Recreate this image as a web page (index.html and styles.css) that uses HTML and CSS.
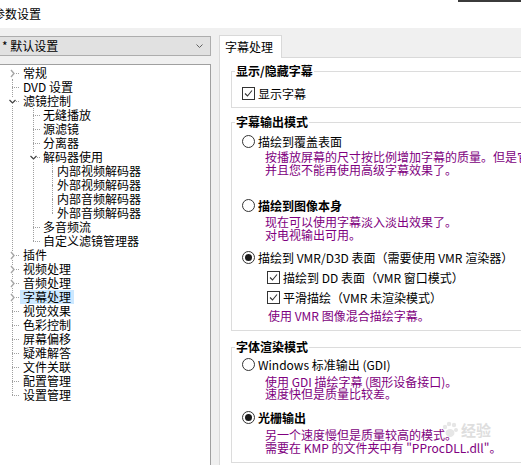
FILE: index.html
```html
<!DOCTYPE html>
<html lang="zh-CN">
<head>
    <meta charset="UTF-8">
    <title>参数设置</title>
    <link rel="stylesheet" href="styles.css">
</head>
<body>

<div class="titlebar">参数设置</div>

<div class="main">
    <div class="left">
        <div class="combo">
            <span>* 默认设置</span>
            <svg class="combo-arrow" width="7" height="5" viewBox="0 0 7 5"><polyline points="0.5,0.5 3.5,3.5 6.5,0.5"/></svg>
        </div>

        <div class="tree">
            <div class="row"><span class="sp"></span><span class="conn first"><svg class="exp" width="7" height="9" viewBox="0 0 7 9"><polyline points="2,1 5,4.5 2,8"/></svg></span><span class="label">常规</span></div>
            <div class="row"><span class="sp"></span><span class="conn"></span><span class="label">DVD 设置</span></div>
            <div class="row"><span class="sp"></span><span class="conn"><svg class="exp open" width="7" height="9" viewBox="0 0 7 9"><polyline points="0.5,3 3.5,6 6.5,3"/></svg></span><span class="label">滤镜控制</span></div>
            <div class="row"><span class="sp"></span><span class="pipe"></span><span class="conn l1"></span><span class="label">无缝播放</span></div>
            <div class="row"><span class="sp"></span><span class="pipe"></span><span class="conn l1"></span><span class="label">源滤镜</span></div>
            <div class="row"><span class="sp"></span><span class="pipe"></span><span class="conn l1"></span><span class="label">分离器</span></div>
            <div class="row"><span class="sp"></span><span class="pipe"></span><span class="conn l1"><svg class="exp open" width="7" height="9" viewBox="0 0 7 9"><polyline points="0.5,3 3.5,6 6.5,3"/></svg></span><span class="label">解码器使用</span></div>
            <div class="row"><span class="sp"></span><span class="pipe"></span><span class="pipe inner"></span><span class="conn l2"></span><span class="label">内部视频解码器</span></div>
            <div class="row"><span class="sp"></span><span class="pipe"></span><span class="pipe inner"></span><span class="conn l2"></span><span class="label">外部视频解码器</span></div>
            <div class="row"><span class="sp"></span><span class="pipe"></span><span class="pipe inner"></span><span class="conn l2"></span><span class="label">内部音频解码器</span></div>
            <div class="row"><span class="sp"></span><span class="pipe"></span><span class="pipe inner"></span><span class="conn l2 last"></span><span class="label">外部音频解码器</span></div>
            <div class="row"><span class="sp"></span><span class="pipe"></span><span class="conn l1"></span><span class="label">多音频流</span></div>
            <div class="row"><span class="sp"></span><span class="pipe"></span><span class="conn l1 last"></span><span class="label">自定义滤镜管理器</span></div>
            <div class="row"><span class="sp"></span><span class="conn"><svg class="exp" width="7" height="9" viewBox="0 0 7 9"><polyline points="2,1 5,4.5 2,8"/></svg></span><span class="label">插件</span></div>
            <div class="row"><span class="sp"></span><span class="conn"><svg class="exp" width="7" height="9" viewBox="0 0 7 9"><polyline points="2,1 5,4.5 2,8"/></svg></span><span class="label">视频处理</span></div>
            <div class="row"><span class="sp"></span><span class="conn"><svg class="exp" width="7" height="9" viewBox="0 0 7 9"><polyline points="2,1 5,4.5 2,8"/></svg></span><span class="label">音频处理</span></div>
            <div class="row"><span class="sp"></span><span class="conn"><svg class="exp" width="7" height="9" viewBox="0 0 7 9"><polyline points="2,1 5,4.5 2,8"/></svg></span><span class="label sel">字幕处理</span></div>
            <div class="row"><span class="sp"></span><span class="conn"></span><span class="label">视觉效果</span></div>
            <div class="row"><span class="sp"></span><span class="conn"></span><span class="label">色彩控制</span></div>
            <div class="row"><span class="sp"></span><span class="conn"></span><span class="label">屏幕偏移</span></div>
            <div class="row"><span class="sp"></span><span class="conn"></span><span class="label">疑难解答</span></div>
            <div class="row"><span class="sp"></span><span class="conn"></span><span class="label">文件关联</span></div>
            <div class="row"><span class="sp"></span><span class="conn"></span><span class="label">配置管理</span></div>
            <div class="row"><span class="sp"></span><span class="conn last"></span><span class="label">设置管理</span></div>
        </div>
    </div>

    <div class="right">
        <div class="tab">字幕处理</div>
        <div class="page">

            <fieldset class="group g-show">
                <legend>显示/隐藏字幕</legend>
                <div class="opt mt8"><span class="cb"><svg width="11" height="11" viewBox="0 0 11 11"><polyline points="2,5.5 4.5,8 9,2.5"/></svg></span>显示字幕</div>
            </fieldset>

            <fieldset class="group">
                <legend>字幕输出模式</legend>
                <div class="opt mt5"><span class="rb"></span>描绘到覆盖表面</div>
                <div class="desc mt2">按播放屏幕的尺寸按比例增加字幕的质量。但是它<br>并且您不能再使用高级字幕效果了。</div>
                <div class="opt bold mt22"><span class="rb"></span>描绘到图像本身</div>
                <div class="desc mt3">现在可以使用字幕淡入淡出效果了。<br>对电视输出可用。</div>
                <div class="opt tall mt6"><span class="rb on"></span>描绘到 VMR/D3D 表面（需要使用 VMR 渲染器）</div>
                <div class="opt tall sub"><span class="cb"><svg width="11" height="11" viewBox="0 0 11 11"><polyline points="2,5.5 4.5,8 9,2.5"/></svg></span>描绘到 DD 表面（VMR 窗口模式）</div>
                <div class="opt tall sub"><span class="cb"><svg width="11" height="11" viewBox="0 0 11 11"><polyline points="2,5.5 4.5,8 9,2.5"/></svg></span>平滑描绘（VMR 未渲染模式）</div>
                <div class="desc vmr mt2">使用 VMR 图像混合描绘字幕。</div>
            </fieldset>

            <fieldset class="group g-font">
                <legend>字体渲染模式</legend>
                <div class="opt mt3"><span class="rb"></span>Windows 标准输出 (GDI)</div>
                <div class="desc tight mt5">使用 GDI 描绘字幕 (图形设备接口)。<br>速度快但是质量比较差。</div>
                <div class="opt bold mt10"><span class="rb on"></span>光栅输出</div>
                <div class="desc mt4">另一个速度慢但是质量较高的模式。<br>需要在 KMP 的文件夹中有 "PProcDLL.dll"。</div>
            </fieldset>

            <div class="watermark">
                <svg width="18" height="18" viewBox="0 0 18 18"><circle cx="4" cy="6" r="2.2"/><circle cx="8" cy="3" r="2.2"/><circle cx="13" cy="4" r="2.2"/><circle cx="15" cy="9" r="2"/><ellipse cx="9" cy="12" rx="4.5" ry="4"/></svg>
                <span>经验</span>
            </div>
        </div>
    </div>
</div>

</body>
</html>
```

FILE: styles.css
```css
body {
    margin: 0;
    overflow: hidden;
    background-color: #f0f0f0;
    font-family: "Noto Sans CJK SC", sans-serif;
    font-size: 12px;
    color: #000;
}

.titlebar {
    position: relative;
    height: 28px;
    line-height: 28px;
    background-color: #fff;
    text-indent: -7px;
    white-space: nowrap;
}
.titlebar::after {
    content: "";
    position: absolute;
    right: 0;
    top: 0;
    width: 63px;
    height: 2px;
    background-color: #3b3b3b;
}

.main {
    display: flex;
    align-items: flex-start;
}

/* left column: profile combo + tree */
.left {
    flex: none;
    width: 212px;
    margin-left: -1px;
}
.combo {
    margin-top: 8px;
    height: 20px;
    box-sizing: border-box;
    border: 1px solid #adadad;
    background-color: #e1e1e1;
    display: flex;
    align-items: center;
    justify-content: space-between;
    padding: 0 7px 0 2px;
    line-height: 18px;
}
.combo-arrow polyline {
    fill: none;
    stroke: #606060;
    stroke-width: 1;
}

.tree {
    margin-top: 8px;
    height: 420px;
    border: 1px solid #a0a0a0;
    background-color: #fff;
    padding-top: 1px;
}
.row {
    display: flex;
    height: 14px;
    line-height: 14px;
    white-space: nowrap;
}
.sp {
    flex: none;
    width: 12px;
}
.pipe {
    flex: none;
    width: 21px;
    background: repeating-linear-gradient(to bottom, #a0a0a0 0 1px, transparent 1px 2px) no-repeat 0 0 / 1px 100%;
}
.pipe.inner {
    width: 19px;
}
.conn {
    flex: none;
    width: 8px;
    display: flex;
    align-items: center;
    background:
        repeating-linear-gradient(to right, #a0a0a0 0 1px, transparent 1px 2px) no-repeat 0 7px / 100% 1px,
        repeating-linear-gradient(to bottom, #a0a0a0 0 1px, transparent 1px 2px) no-repeat 0 0 / 1px 100%;
}
.conn.l1 {
    width: 7px;
}
.conn.l2 {
    width: 2px;
}
.conn.last {
    background-size: 100% 1px, 1px 8px;
}
.conn.first {
    background-position: 0 7px, 0 7px;
}
.exp {
    flex: none;
    margin-left: -3px;
    background-color: #fff;
}
.exp polyline {
    fill: none;
    stroke: #a6a6a6;
    stroke-width: 1.4;
}
.exp.open polyline {
    stroke: #404040;
    stroke-width: 1.2;
}
.label {
    padding: 0 3px;
}
.label.sel {
    background-color: #cce8ff;
}

/* right column: tab page */
.right {
    flex: none;
    width: 400px;
    margin-left: 8px;
    padding-top: 7px;
}
.tab {
    position: relative;
    z-index: 1;
    width: 63px;
    height: 23px;
    box-sizing: border-box;
    margin-bottom: -1px;
    border: 1px solid #d9d9d9;
    border-bottom: none;
    background-color: #fff;
    padding-left: 5px;
    line-height: 21px;
}
.page {
    position: relative;
    height: 420px;
    border: 1px solid #d9d9d9;
    background-color: #fff;
    padding: 6px 0 0 11px;
}

.group {
    width: 330px;
    margin: 0;
    padding: 0 0 8px 10px;
    border: 1px solid #dcdcdc;
    min-width: 0;
}
.group + .group {
    margin-top: 7px;
}
.group.g-show {
    padding-bottom: 7px;
}
.group.g-font {
    margin-top: 9px;
}
.group legend {
    font-weight: bold;
    line-height: 14px;
    padding: 0 1px;
    margin-left: -7px;
}

.opt {
    display: flex;
    align-items: center;
    gap: 3px;
    height: 14px;
    white-space: nowrap;
}
.opt.tall {
    height: 20px;
}
.opt.sub {
    margin-left: 25px;
}
.opt.bold {
    font-weight: bold;
}

.cb, .rb {
    flex: none;
    width: 13px;
    height: 13px;
    box-sizing: border-box;
    border: 1px solid #333;
    background-color: #fff;
    display: flex;
    align-items: center;
    justify-content: center;
}
.cb polyline {
    fill: none;
    stroke: #333;
    stroke-width: 1.1;
}
.rb {
    border-radius: 50%;
}
.rb.on::after {
    content: "";
    width: 7px;
    height: 7px;
    border-radius: 50%;
    background-color: #1a1a1a;
}

.desc {
    margin-left: 23px;
    color: #800080;
    line-height: 13px;
    white-space: nowrap;
}
.desc.tight {
    line-height: 12px;
}
.desc.vmr {
    margin-left: 26px;
}

.mt2 { margin-top: 2px; }
.mt3 { margin-top: 3px; }
.mt4 { margin-top: 4px; }
.mt5 { margin-top: 5px; }
.mt6 { margin-top: 6px; }
.mt8 { margin-top: 8px; }
.mt10 { margin-top: 10px; }
.mt22 { margin-top: 22px; }

.watermark {
    position: absolute;
    left: 221px;
    top: 361px;
    display: flex;
    align-items: center;
    gap: 2px;
    color: #dedede;
    font-size: 15px;
    font-weight: bold;
}
.watermark svg {
    fill: #e6e6e6;
}
```
